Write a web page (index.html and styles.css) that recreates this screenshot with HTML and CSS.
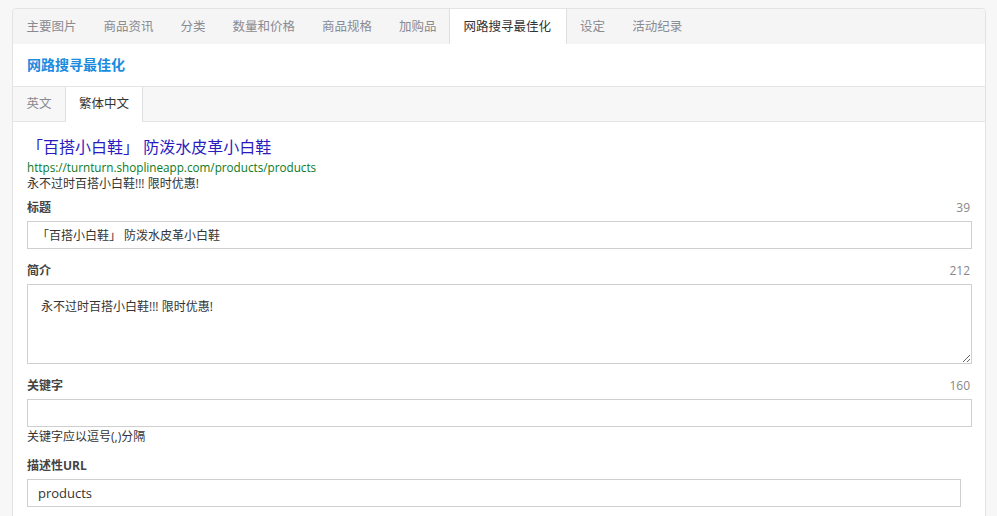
FILE: index.html
```html
<!DOCTYPE html>
<html lang="zh-CN">
<head>
  <meta charset="UTF-8" />
  <title>商品 - 网路搜寻最佳化</title>
  <meta name="viewport" content="width=device-width, initial-scale=1.0" />
  <link rel="stylesheet" href="styles.css">
</head>
<body>

  <div class="panel">
    <!-- Main tabs -->
    <div class="tabs">
      <div class="tab">主要图片</div>
      <div class="tab">商品资讯</div>
      <div class="tab">分类</div>
      <div class="tab">数量和价格</div>
      <div class="tab">商品规格</div>
      <div class="tab">加购品</div>
      <div class="tab active">网路搜寻最佳化</div>
      <div class="tab">设定</div>
      <div class="tab">活动纪录</div>
    </div>

    <div class="panel-heading">网路搜寻最佳化</div>

    <!-- Language tabs -->
    <div class="lang-tabs">
      <div class="lang-tab">英文</div>
      <div class="lang-tab active">繁体中文</div>
    </div>

    <div class="panel-body">
      <div class="preview">
        <div class="preview-title">「百搭小白鞋」 防泼水皮革小白鞋</div>
        <div class="preview-url">https://turnturn.shoplineapp.com/products/products</div>
        <div class="preview-desc">永不过时百搭小白鞋!!! 限时优惠!</div>
      </div>

      <div class="form-group">
        <div class="label-row">
          <label>标题</label>
          <span class="counter">39</span>
        </div>
        <input type="text" class="field field-title" value="「百搭小白鞋」 防泼水皮革小白鞋" />
      </div>

      <div class="form-group">
        <div class="label-row">
          <label>简介</label>
          <span class="counter">212</span>
        </div>
        <textarea class="field field-area">永不过时百搭小白鞋!!! 限时优惠!</textarea>
      </div>

      <div class="form-group">
        <div class="label-row">
          <label>关键字</label>
          <span class="counter">160</span>
        </div>
        <input type="text" class="field" value="" />
        <p class="help">关键字应以逗号(,)分隔</p>
      </div>

      <div class="form-group">
        <div class="label-row">
          <label>描述性URL</label>
        </div>
        <input type="text" class="field field-url" value="products" />
      </div>
    </div>
  </div>

</body>
</html>
```

FILE: styles.css
```css
body {
  font-family: "Open Sans", "Noto Sans CJK SC", sans-serif;
  background: #f7f7f7;
  color: #333;
  margin: 0;
  padding: 8px 11px 0 12px;
  overflow: hidden;
}
.panel {
  background: #fff;
  border: 1px solid #e3e3e3;
  border-radius: 4px 4px 0 0;
  height: 560px;
}
.tabs {
  display: flex;
  background: #f5f5f5;
  height: 35px;
  border-radius: 4px 4px 0 0;
}
.tab {
  padding: 0 13.5px;
  font-size: 12.5px;
  line-height: 35px;
  color: #8a8a92;
}
.tab.active {
  padding: 0 14.5px 0 13.5px;
  margin-left: -1px;
  background: #fff;
  color: #333;
  border-left: 1px solid #e0e0e0;
  border-right: 1px solid #e0e0e0;
}
.panel-heading {
  height: 42px;
  line-height: 42px;
  padding: 0 14px;
  font-size: 14px;
  font-weight: 600;
  color: #1b8be0;
  border-bottom: 1px solid #e5e5e5;
}
.lang-tabs {
  display: flex;
  background: #f7f7f7;
  height: 34px;
  border-bottom: 1px solid #e5e5e5;
}
.lang-tab {
  padding: 0 13.5px;
  font-size: 12.5px;
  line-height: 34px;
  color: #8a8a92;
}
.lang-tab.active {
  padding: 0 13px;
  background: #fff;
  color: #333;
  border-left: 1px solid #e0e0e0;
  border-right: 1px solid #e0e0e0;
  height: 35px;
}
.panel-body {
  padding: 14px 13px 0 14px;
}
.preview-title {
  font-size: 16px;
  line-height: 22px;
  color: #2a1bc0;
}
.preview-url {
  font-size: 11.7px;
  line-height: 15px;
  margin-top: 2px;
  color: #0a7a1e;
}
.preview-desc {
  font-size: 12px;
  line-height: 15px;
  margin-top: 1px;
  color: #333;
}
.form-group {
  margin-top: 8px;
  margin-bottom: 13px;
}
.form-group + .form-group {
  margin-top: 0;
}
.label-row {
  display: flex;
  justify-content: space-between;
  margin-bottom: 5px;
}
label {
  font-size: 12px;
  line-height: 17px;
  font-weight: bold;
  color: #444;
}
.counter {
  font-size: 12px;
  line-height: 17px;
  color: #888;
  padding-right: 2px;
}
.field {
  display: block;
  box-sizing: border-box;
  width: 100%;
  height: 28px;
  margin: 0;
  padding: 0 10px;
  border: 1px solid #cfcfcf;
  border-radius: 0;
  font-family: "Open Sans", "Noto Sans CJK SC", sans-serif;
  font-size: 13px;
  color: #333;
  background: #fff;
}
.field-title {
  font-size: 12px;
  padding-left: 9px;
}
.field-area {
  height: 80px;
  padding: 13px 13px 11px;
  font-size: 12px;
  line-height: 17px;
  resize: vertical;
}
.field-url {
  width: calc(100% - 11px);
}
.help {
  margin: 2px 0 0;
  font-size: 12px;
  line-height: 15px;
  color: #333;
}
```
